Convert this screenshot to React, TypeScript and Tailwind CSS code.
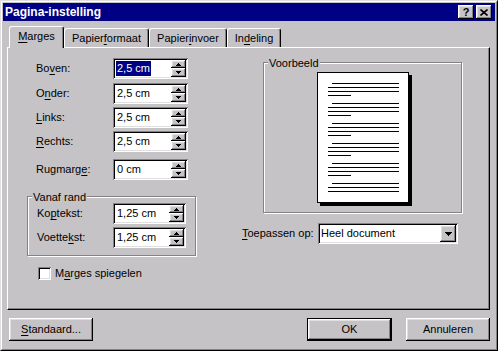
import React from "react";

const font = "font-['Liberation_Sans',Arial,sans-serif]";
const raised =
  "bg-[#c6c3c6] shadow-[inset_-1px_-1px_0_#000,inset_1px_1px_0_#fff,inset_-2px_-2px_0_#848284,inset_2px_2px_0_#dedfde]";
const sunken =
  "bg-white shadow-[inset_1px_1px_0_#848284,inset_-1px_-1px_0_#fff,inset_2px_2px_0_#000,inset_-2px_-2px_0_#dedfde]";
const etched = "border border-[#848284] shadow-[1px_1px_0_#fff,inset_1px_1px_0_#fff]";

function U({ children }: { children: React.ReactNode }) {
  return <span className="underline underline-offset-[2px]">{children}</span>;
}

function Arrow({ down }: { down?: boolean }) {
  return (
    <svg width="5" height="3" viewBox="0 0 5 3" className={down ? "rotate-180" : ""}>
      <path d="M2 0h1v1h1v1h1v1H0V2h1V1h1z" fill="#000" />
    </svg>
  );
}

function Spin() {
  return (
    <div className="flex flex-col">
      <div className={`flex h-[8px] w-[15px] items-center justify-center ${raised}`}>
        <Arrow />
      </div>
      <div className={`flex h-[9px] w-[15px] items-center justify-center ${raised}`}>
        <Arrow down />
      </div>
    </div>
  );
}

function SpinInput({ value, width, selected }: { value: string; width: string; selected?: boolean }) {
  return (
    <div className={`flex h-[21px] items-center justify-between pl-[2px] pr-[2px] ${width} ${sunken}`}>
      <span className={`ml-px px-px leading-[15px] ${selected ? "bg-[#000084] text-white" : ""}`}>{value}</span>
      <Spin />
    </div>
  );
}

function Row({ label, value, className = "", selected }: { label: React.ReactNode; value: string; className?: string; selected?: boolean }) {
  return (
    <div className={`flex h-[21px] items-center ${className}`}>
      <span className="w-[86px] pl-[9px]">{label}</span>
      <SpinInput value={value} width="w-[75px]" selected={selected} />
    </div>
  );
}

function Tab({ children, width, active }: { children: React.ReactNode; width: string; active?: boolean }) {
  return (
    <div
      className={`flex items-center justify-center rounded-t-[3px] border-l border-t border-r border-white border-r-black bg-[#c6c3c6] shadow-[inset_-1px_0_0_#848284] ${width} ${
        active ? "relative z-10 -mb-px h-[22px] pb-[2px]" : "h-[19px]"
      }`}
    >
      {children}
    </div>
  );
}

function PageLines() {
  const groups = [4, 4, 4, 4, 4, 3];
  return (
    <div className="flex flex-col gap-[7px]">
      {groups.map((n, g) => (
        <div key={g} className="flex flex-col gap-[3px]">
          {Array.from({ length: n }).map((_, i) => (
            <div
              key={i}
              className={`h-px bg-black ${
                i === 0 ? "ml-[4px] w-[67px]" : i === 3 ? "w-[23px]" : "w-[71px]"
              }`}
            />
          ))}
        </div>
      ))}
    </div>
  );
}

export default function App() {
  return (
    <div
      className={`h-[351px] w-[498px] border border-b-black border-l-[#dedfde] border-r-black border-t-[#dedfde] bg-[#c6c3c6] text-[11px] text-black ${font}`}
    >
      <div className="flex h-full flex-col border border-white border-b-[#848284] border-r-[#848284] p-px">
        {/* title bar */}
        <div className="flex h-[18px] items-center bg-[#000084] pl-[2px] pr-[3px]">
          <span className="flex-1 text-[12px] font-bold text-white">Pagina-instelling</span>
          <div className={`flex h-[14px] w-[16px] items-center justify-center pt-px text-[11px] font-bold ${raised}`}>?</div>
          <div className={`ml-[2px] flex h-[14px] w-[16px] items-center justify-center ${raised}`}>
            <svg width="8" height="7" viewBox="0 0 8 7">
              <path d="M0.5 0.5L7.5 6.5M7.5 0.5L0.5 6.5" stroke="#000" strokeWidth="1.6" />
            </svg>
          </div>
        </div>

        {/* tabs */}
        <div className="ml-[6px] mt-[5px] flex h-[21px] items-end">
          <Tab width="w-[55px]" active>
            <U>M</U>arges
          </Tab>
          <Tab width="w-[85px]">
            Papier<U>f</U>ormaat
          </Tab>
          <Tab width="w-[78px]">
            Papier<U>i</U>nvoer
          </Tab>
          <Tab width="w-[54px]">
            In<U>d</U>eling
          </Tab>
        </div>

        {/* panel */}
        <div className="ml-[4px] flex h-[263px] w-[483px] border border-white border-b-black border-r-black shadow-[inset_-1px_-1px_0_#848284]">
          <div className="ml-[19px] mt-[10px] flex w-[169px] flex-col">
            <Row label={<>Bo<U>v</U>en:</>} value="2,5 cm" selected />
            <Row className="mt-[4px]" label={<>O<U>n</U>der:</>} value="2,5 cm" />
            <Row className="mt-[3px]" label={<><U>L</U>inks:</>} value="2,5 cm" />
            <Row className="mt-[3px]" label={<><U>R</U>echts:</>} value="2,5 cm" />
            <Row className="mt-[7px]" label={<>Rugmarg<U>e</U>:</>} value="0 cm" />

            <div className={`relative mt-[16px] flex h-[60px] w-[169px] flex-col gap-[3px] pt-[6px] ${etched}`}>
              <span className="absolute -top-[8px] left-[4px] bg-[#c6c3c6] px-px">Vanaf rand</span>
              <div className="flex h-[21px] items-center">
                <span className="w-[85px] pl-[9px]">
                  Ko<U>p</U>tekst:
                </span>
                <SpinInput value="1,25 cm" width="w-[73px]" />
              </div>
              <div className="flex h-[21px] items-center">
                <span className="w-[85px] pl-[9px]">
                  Voette<U>k</U>st:
                </span>
                <SpinInput value="1,25 cm" width="w-[73px]" />
              </div>
            </div>

            <div className="ml-[11px] mt-[9px] flex items-center">
              <div className={`h-[13px] w-[13px] ${sunken}`} />
              <span className="ml-[4px]">
                M<U>a</U>rges spiegelen
              </span>
            </div>
          </div>

          <div className="ml-[46px] mt-[14px] flex flex-col">
            <div className={`relative ml-[21px] flex h-[151px] w-[199px] justify-center pt-[9px] ${etched}`}>
              <span className="absolute -top-[8px] left-[4px] bg-[#c6c3c6] px-px">Voorbeeld</span>
              <div className="h-[131px] w-[92px] border border-black bg-white pl-[10px] pt-[10px] shadow-[3px_3px_0_#000]">
                <PageLines />
              </div>
            </div>
            <div className="mt-[10px] flex h-[21px] items-center">
              <span className="w-[76px]">
                <U>T</U>oepassen op:
              </span>
              <div className={`flex h-[21px] w-[140px] items-center justify-between pl-[3px] pr-[2px] ${sunken}`}>
                <span>Heel document</span>
                <div className={`flex h-[17px] w-[16px] items-center justify-center ${raised}`}>
                  <svg width="7" height="4" viewBox="0 0 7 4">
                    <path d="M0 0h7v1H6v1H5v1H4v1H3V3H2V2H1V1H0z" fill="#000" />
                  </svg>
                </div>
              </div>
            </div>
          </div>
        </div>

        {/* buttons */}
        <div className="mt-[8px] flex">
          <div className={`ml-[6px] flex h-[23px] w-[84px] items-center justify-center ${raised}`}>
            <U>S</U>tandaard...
          </div>
          <div className="ml-auto h-[23px] w-[85px] border border-black">
            <div className={`flex h-full w-full items-center justify-center ${raised}`}>OK</div>
          </div>
          <div className={`ml-[14px] mr-[5px] flex h-[23px] w-[84px] items-center justify-center ${raised}`}>
            Annuleren
          </div>
        </div>
      </div>
    </div>
  );
}
